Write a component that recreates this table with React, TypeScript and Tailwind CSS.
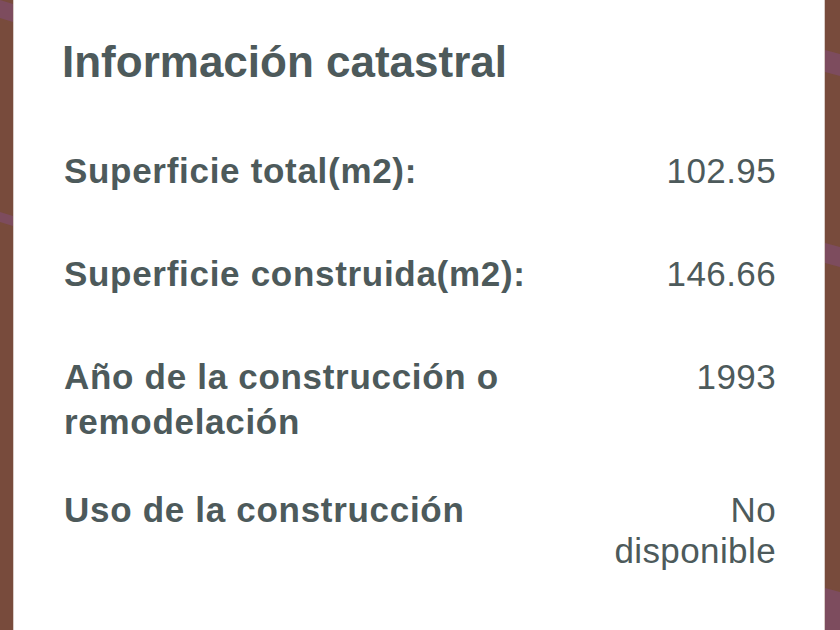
const rows = [
  { label: "Superficie total(m2):", value: "102.95" },
  { label: "Superficie construida(m2):", value: "146.66" },
  { label: "Año de la construcción o remodelación", value: "1993" },
  { label: "Uso de la construcción", value: "No disponible" },
];

function MapStrip({ streaks }: { streaks: { y: number; h: number }[] }) {
  return (
    <div className="relative h-full flex-1 bg-[#784b3c]">
      <svg className="absolute inset-0 h-full w-full" viewBox="0 0 15 630" preserveAspectRatio="none">
        {streaks.map((s, i) => (
          <path
            key={i}
            d={`M0 ${s.y} L15 ${s.y + 4} L15 ${s.y + 4 + s.h} L0 ${s.y + s.h} Z`}
            fill="#7e4c66"
            opacity="0.8"
          />
        ))}
      </svg>
    </div>
  );
}

export default function App() {
  return (
    <div className="flex h-[630px] w-[840px] bg-[#784b3c] font-['Liberation_Sans',Arial,sans-serif] text-[#4d5a5b]">
      <div className="flex w-[13px]">
        <MapStrip streaks={[{ y: 0, h: 18 }, { y: 212, h: 10 }]} />
      </div>
      <div className="h-full w-[812px] border-x border-[#d9ccc7] bg-white pl-[48px] pr-[48px] pt-[36px]">
        <h2 className="text-[44px] font-bold leading-[52px]">Información catastral</h2>
        <div className="mt-[60px] flex flex-col">
          {rows.map((r) => (
            <div key={r.label} className="grid min-h-[103px] grid-cols-[1fr_170px] items-baseline pb-[43px]">
              <div className="pl-[2px] text-[35px] font-bold leading-[45px] tracking-[0.7px]">{r.label}</div>
              <div className="text-right text-[35px] leading-[41px] tracking-[0.4px]">{r.value}</div>
            </div>
          ))}
        </div>
      </div>
      <div className="flex flex-1">
        <MapStrip streaks={[{ y: 50, h: 22 }, { y: 243, h: 20 }, { y: 588, h: 42 }]} />
      </div>
    </div>
  );
}
